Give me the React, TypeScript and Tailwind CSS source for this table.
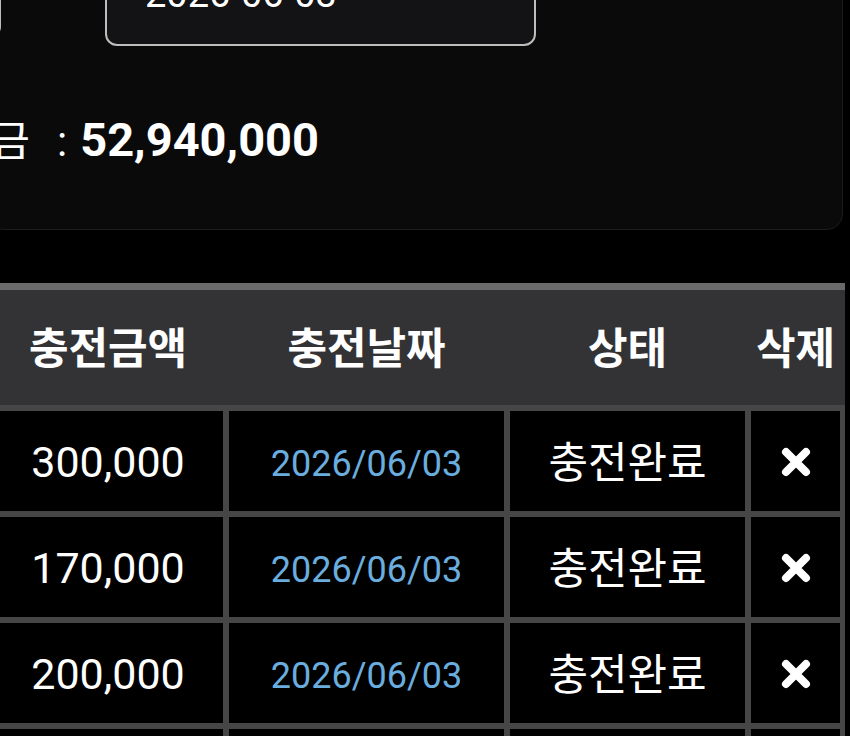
import React from 'react';

const rows = [
  { amount: '300,000', date: '2026/06/03', status: '충전완료' },
  { amount: '170,000', date: '2026/06/03', status: '충전완료' },
  { amount: '200,000', date: '2026/06/03', status: '충전완료' },
  { amount: '150,000', date: '2026/06/02', status: '충전완료' },
];

const font = { fontFamily: 'Roboto, "Noto Sans CJK KR", sans-serif' };

function DeleteIcon() {
  return (
    <svg width="32" height="32" viewBox="0 0 32 32" aria-hidden="true">
      <path d="M6 6 L26 26 M26 6 L6 26" stroke="#ffffff" strokeWidth="8" strokeLinecap="round" />
    </svg>
  );
}

export default function App() {
  return (
    <div className="w-[850px] h-[736px] overflow-hidden bg-black text-white" style={font}>
      <div className="ml-[-13px] w-[858px]">
        {/* summary card */}
        <div className="mt-[-100px] w-[856px] rounded-[16px] border border-[#1c1c1e] bg-[#0a0a0b] pt-[35px] pb-[61px]">
          <div className="flex items-start gap-[104px] ml-[-127px]">
            <div className="w-[140px] h-[101px] shrink-0 rounded-[10px] border-2 border-[#bdbdbd] bg-[#131315]" />
            <div className="w-[431px] h-[110px] shrink-0 flex items-end rounded-[12px] border-2 border-[#bdbdbd] bg-[#131315] pl-[38px] pb-[31px]">
              <span className="text-[38px] leading-none">2026-06-03</span>
            </div>
          </div>
          <div className="mt-[66px] ml-[-188px] flex items-baseline h-[56px] leading-[56px] whitespace-nowrap">
            <span className="w-[230px] shrink-0 text-right text-[42px] font-normal">총 충전금</span>
            <span className="ml-[27px] text-[42px] font-normal">:</span>
            <span className="ml-[13px] text-[47px] font-bold">52,940,000</span>
          </div>
        </div>

        {/* history table */}
        <div className="mt-[53px]">
          <div className="grid grid-cols-[230px_275px_235px_89px] gap-x-[6px] pl-[6px] pr-[5px] h-[122px] items-center border-t-[7px] border-[#6a6a6a] bg-[#333335] text-[43px] font-bold text-center pt-[4px]">
            <div>충전금액</div>
            <div>충전날짜</div>
            <div>상태</div>
            <div>삭제</div>
          </div>
          <div className="grid grid-cols-[230px_275px_235px_89px] auto-rows-[100px] gap-[6px] pt-[6px] pl-[6px] pr-[5px] bg-[#464646]">
            {rows.map((r, i) => (
              <React.Fragment key={i}>
                <div className="bg-black flex items-center justify-center pt-[3px] text-[43px]">{r.amount}</div>
                <div className="bg-black flex items-center justify-center pt-[6px] text-[36px] text-[#6aaddf]">{r.date}</div>
                <div className="bg-black flex items-center justify-center pt-[5px] text-[43px]">{r.status}</div>
                <div className="bg-black flex items-center justify-center pt-[2px]">
                  <DeleteIcon />
                </div>
              </React.Fragment>
            ))}
          </div>
        </div>
      </div>
    </div>
  );
}
